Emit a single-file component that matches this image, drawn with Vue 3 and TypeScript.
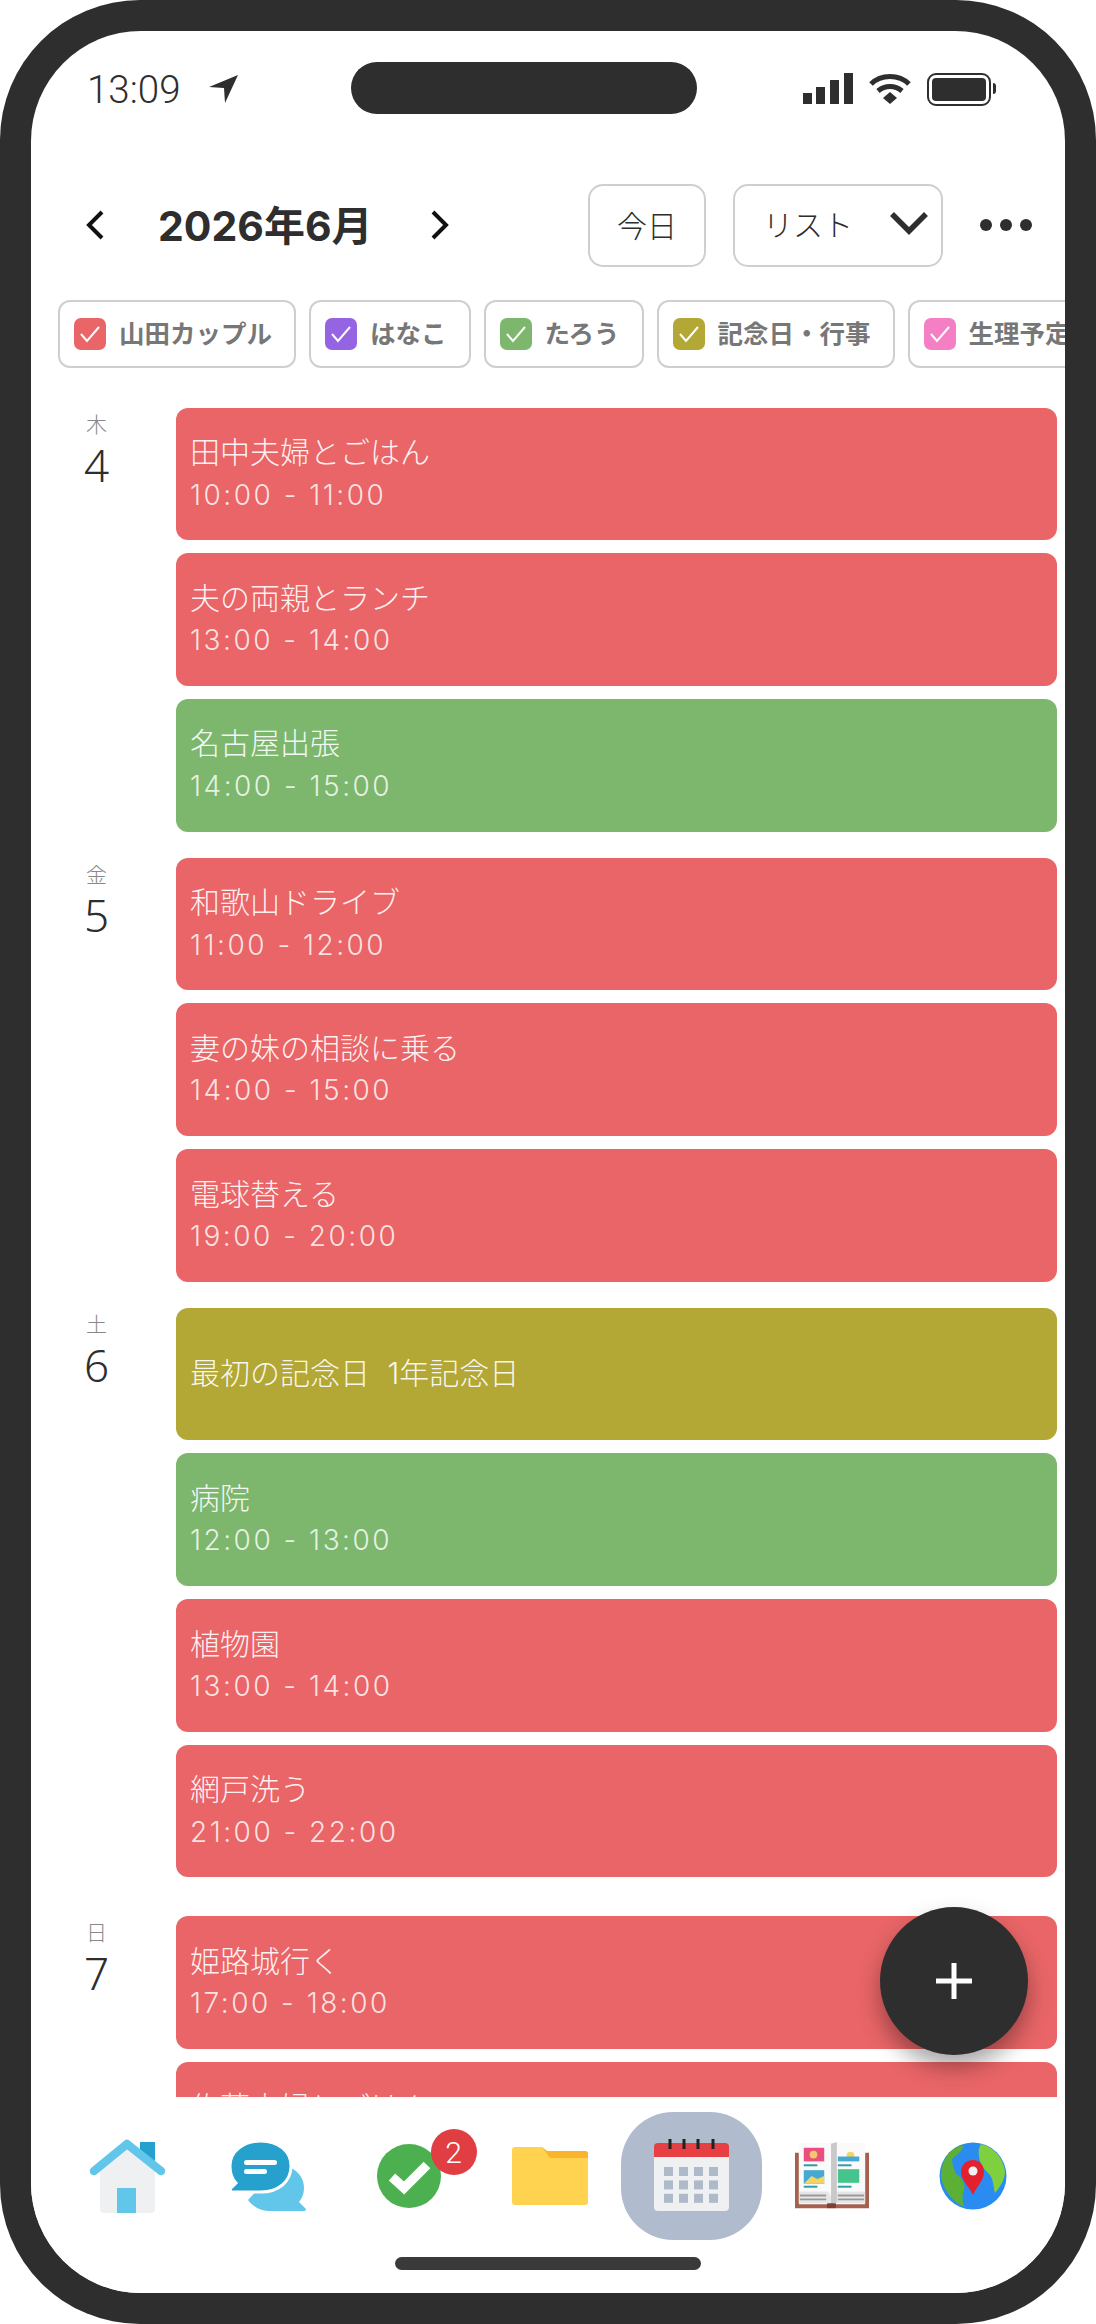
<script setup lang="ts">
interface Item {
  title: string;
  time?: string;
  color: string;
}
interface Day {
  week: string;
  date: number;
  items: Item[];
}

const RED = "#e96567";
const GREEN = "#7db76d";
const OLIVE = "#b3a735";

const chips = [
  { label: "山田カップル", color: RED },
  { label: "はなこ", color: "#9464e3" },
  { label: "たろう", color: GREEN },
  { label: "記念日・行事", color: OLIVE },
  { label: "生理予定日", color: "#f57fc5" },
];

const days: Day[] = [
  {
    week: "木",
    date: 4,
    items: [
      { title: "田中夫婦とごはん", time: "10:00 - 11:00", color: RED },
      { title: "夫の両親とランチ", time: "13:00 - 14:00", color: RED },
      { title: "名古屋出張", time: "14:00 - 15:00", color: GREEN },
    ],
  },
  {
    week: "金",
    date: 5,
    items: [
      { title: "和歌山ドライブ", time: "11:00 - 12:00", color: RED },
      { title: "妻の妹の相談に乗る", time: "14:00 - 15:00", color: RED },
      { title: "電球替える", time: "19:00 - 20:00", color: RED },
    ],
  },
  {
    week: "土",
    date: 6,
    items: [
      { title: "最初の記念日 1年記念日", color: OLIVE },
      { title: "病院", time: "12:00 - 13:00", color: GREEN },
      { title: "植物園", time: "13:00 - 14:00", color: RED },
      { title: "網戸洗う", time: "21:00 - 22:00", color: RED },
    ],
  },
  {
    week: "日",
    date: 7,
    items: [
      { title: "姫路城行く", time: "17:00 - 18:00", color: RED },
      { title: "佐藤夫婦とごはん", time: "19:00 - 20:00", color: RED },
    ],
  },
];

const calendarCells = [0, 1, 2].flatMap((r) => [0, 1, 2, 3].map((c) => ({ x: 10 + c * 15, y: 28 + r * 13.4 })));
</script>

<template>
  <div class="phone">
    <div class="screen">
      <div class="notch"></div>

      <div class="status">
        <div class="status-left">
          <span class="clock">13:09</span>
          <svg width="30" height="30" viewBox="0 0 30 30"><path d="M0 13 29 1 16 29 15 14Z" fill="#2e2e2e" /></svg>
        </div>
        <div class="status-right">
          <svg width="50" height="32" viewBox="0 0 50 32" fill="#2e2e2e">
            <rect x="0" y="20" width="9" height="11" />
            <rect x="13" y="14" width="9" height="17" />
            <rect x="27" y="7" width="9" height="24" />
            <rect x="41" y="0" width="9" height="31" />
          </svg>
          <svg width="44" height="32" viewBox="0 0 44 32" fill="none" stroke="#2e2e2e" stroke-width="5">
            <path d="M3 11C13 1 31 1 41 11" />
            <path d="M10 18C17 12 27 12 34 18" />
            <path d="M15 25 22 19 29 25 22 31Z" fill="#2e2e2e" stroke="none" />
          </svg>
          <div class="battery"><div class="battery-fill"></div></div>
        </div>
      </div>

      <header class="toolbar">
        <svg class="chevron" width="22" height="32" viewBox="0 0 22 32" fill="none" stroke="#111" stroke-width="4">
          <path d="M18 3 5 16 18 29" />
        </svg>
        <h1 class="month">2026年6月</h1>
        <svg class="chevron" width="22" height="32" viewBox="0 0 22 32" fill="none" stroke="#111" stroke-width="4">
          <path d="M4 3 17 16 4 29" />
        </svg>
        <button class="btn today">今日</button>
        <button class="btn view">
          <span>リスト</span>
          <svg width="40" height="26" viewBox="0 0 40 26" fill="none" stroke="#2e2e2e" stroke-width="5.5">
            <path d="M3 4 20 21 37 4" />
          </svg>
        </button>
        <div class="more"><i></i><i></i><i></i></div>
      </header>

      <div class="chips">
        <div v-for="chip in chips" :key="chip.label" class="chip">
          <span class="check" :style="{ background: chip.color }">
            <svg width="22" height="20" viewBox="0 0 22 20" fill="none" stroke="#fff" stroke-width="2">
              <path d="M2 10 8 17 20 3" />
            </svg>
          </span>
          <span class="chip-label">{{ chip.label }}</span>
        </div>
      </div>

      <main class="list">
        <section v-for="day in days" :key="day.date" class="day">
          <div class="day-label">
            <span class="week">{{ day.week }}</span>
            <span class="date">{{ day.date }}</span>
          </div>
          <div class="cards">
            <div v-for="item in day.items" :key="item.title" class="card" :style="{ background: item.color }">
              <div class="title">{{ item.title }}</div>
              <div v-if="item.time" class="time">{{ item.time }}</div>
            </div>
          </div>
        </section>
      </main>

      <button class="fab">
        <svg width="40" height="40" viewBox="0 0 40 40" fill="none" stroke="#fff" stroke-width="5">
          <path d="M20 2V38M2 20H38" />
        </svg>
      </button>

      <nav class="nav">
        <div class="nav-item">
          <svg width="78" height="78" viewBox="0 0 78 78">
            <rect x="52" y="5" width="15" height="24" fill="#26a1cd" />
            <path d="M12 34 39 10 67 34V72a4 4 0 0 1-4 4H16a4 4 0 0 1-4-4Z" fill="#eef0f1" />
            <rect x="29" y="51" width="19" height="25" fill="#62c6ea" />
            <path d="M6 34 39 7 73 34" fill="none" stroke="#62c6ea" stroke-width="8.5" stroke-linejoin="round" stroke-linecap="round" />
          </svg>
        </div>
        <div class="nav-item">
          <svg width="80" height="76" viewBox="0 0 80 76">
            <path d="M56 27C70 31 76 40 76 50 76 56 74 60 71 64L78 71 77 73H42C33 73 25 69 20 62L40 40Z" fill="#62c6ea" />
            <path d="M33 3C50 3 63 13 63 28 63 44 50 54 33 54H3L2 51 8 45C4 41 2 35 2 28 2 13 16 3 33 3Z" fill="#26a1cd" stroke="#fff" stroke-width="3" />
            <rect x="16" y="22" width="33" height="5" rx="2.5" fill="#fff" />
            <rect x="16" y="31" width="23" height="5" rx="2.5" fill="#fff" />
          </svg>
        </div>
        <div class="nav-item todo">
          <svg width="64" height="64" viewBox="0 0 64 64">
            <circle cx="32" cy="32" r="32" fill="#4caf50" />
            <path d="M15 33 27 44 50 21" fill="none" stroke="#fff" stroke-width="9.5" />
          </svg>
          <span class="badge">2</span>
        </div>
        <div class="nav-item">
          <svg width="76" height="58" viewBox="0 0 76 58">
            <path d="M3 0H30L35 4H73a3 3 0 0 1 3 3V55a3 3 0 0 1-3 3H3a3 3 0 0 1-3-3V3a3 3 0 0 1 3-3Z" fill="#ffd24f" />
            <path d="M30 0 35 4H73a3 3 0 0 1 3 3V11H38Z" fill="#f9b42b" />
          </svg>
        </div>
        <div class="nav-item active">
          <svg width="75" height="74" viewBox="0 0 75 74">
            <path d="M0 18H75V68a4 4 0 0 1-4 4H4a4 4 0 0 1-4-4Z" fill="#eef0f2" />
            <path d="M4 4H71a4 4 0 0 1 4 4V18H0V8a4 4 0 0 1 4-4Z" fill="#e63f44" />
            <path d="M16 0V10M30 0V10M44 0V10M59 0V10" stroke="#222" stroke-width="3" />
            <rect v-for="cell in calendarCells" :key="`${cell.x}-${cell.y}`" :x="cell.x" :y="cell.y" width="9" height="9" fill="#aeb9c9" />
          </svg>
        </div>
        <div class="nav-item">
          <svg width="74" height="70" viewBox="0 0 76 70">
            <path d="M0 11H4V63H72V11H76V68H0Z" fill="#a5604f" />
            <path d="M4 1H38V64H4Z" fill="#fafafa" />
            <path d="M38 1H72V64H38Z" fill="#fafafa" />
            <circle cx="57" cy="14" r="4" fill="#f4d35e" />
            <rect x="9" y="6" width="21" height="14" fill="#ea4f80" />
            <circle cx="19" cy="13" r="4" fill="#f4c86a" />
            <rect x="9" y="23" width="14" height="2" fill="#2a9ca8" />
            <rect x="9" y="29" width="21" height="14" fill="#45a9d4" />
            <path d="M9 43 17 35 23 38 30 35V43Z" fill="#f4d35e" />
            <rect x="9" y="45" width="14" height="2" fill="#2a9ca8" />
            <rect x="44" y="15" width="22" height="5" fill="#45a9d4" />
            <rect x="44" y="23" width="14" height="2" fill="#2a9ca8" />
            <rect x="44" y="28" width="22" height="14" fill="#45c48d" />
            <rect x="44" y="45" width="14" height="2" fill="#2a9ca8" />
            <path d="M4 51H34L38 58 42 51H72V63H4Z" fill="#e6e6e6" />
            <path d="M5 55H32M44 55H71M5 59H32M44 59H71" stroke="#999" stroke-width="2" />
            <path d="M37 2 43 0V62L37 64Z" fill="#c9c9c9" />
            <rect x="33" y="63" width="9" height="5" fill="#7d3f35" />
          </svg>
        </div>
        <div class="nav-item">
          <svg width="70" height="70" viewBox="0 0 70 70">
            <circle cx="35" cy="35" r="33.5" fill="#2a8cf0" />
            <path d="M12 11C18 6 22 4 25 5 25 10 18 14 14 18 14 23 16 28 18 33 24 37 28 43 26 49 24 54 24 58 26 66 15 61 6 50 3 36 3 26 6 17 12 11Z" fill="#5bb035" />
            <path d="M43 3C56 6 65 17 67 30 67 38 63 45 57 52 55 46 56 40 52 34 46 28 42 24 41 15 40 10 41 6 43 3Z" fill="#7ed03f" />
            <path d="M35 19C28 19 23 24 23 31 23 39 31 45 35 54 39 45 46 39 46 31 46 24 42 19 35 19Z" fill="#e5202e" />
            <circle cx="35" cy="30" r="4.5" fill="#f1f1f1" />
          </svg>
        </div>
      </nav>

      <div class="home-bar"><span></span></div>
    </div>
  </div>
</template>

<style scoped>
.phone {
  width: 1096px;
  height: 2324px;
  box-sizing: border-box;
  padding: 31px;
  border-radius: 140px;
  background: #2e2e2e;
  font-family: "Noto Sans CJK JP", "Noto Sans", sans-serif;
}

.screen {
  position: relative;
  display: flex;
  flex-direction: column;
  height: 100%;
  overflow: hidden;
  border-radius: 110px;
  background: #fff;
}

.notch {
  position: absolute;
  top: 31px;
  left: 320px;
  width: 346px;
  height: 52px;
  border-radius: 26px;
  background: #2e2e2e;
}

.status {
  display: flex;
  justify-content: space-between;
  align-items: center;
  height: 58px;
  padding: 29px 74px 0 56px;
  flex: none;
}

.status-left {
  display: flex;
  align-items: center;
  gap: 28px;
}

.clock {
  font-family: Roboto, sans-serif;
  font-size: 38.5px;
  font-weight: 300;
  color: #2e2e2e;
}

.status-right {
  display: flex;
  align-items: center;
  gap: 15px;
}

.battery {
  position: relative;
  box-sizing: border-box;
  width: 64px;
  height: 33px;
  padding: 3px;
  border: 2.5px solid #2e2e2e;
  border-radius: 9px;
}

.battery::after {
  content: "";
  position: absolute;
  top: 8px;
  right: -7px;
  width: 3px;
  height: 11px;
  border-radius: 0 3px 3px 0;
  background: #2e2e2e;
}

.battery-fill {
  height: 100%;
  border-radius: 4px;
  background: #2e2e2e;
}

.toolbar {
  display: flex;
  align-items: center;
  height: 83px;
  margin-top: 65.5px;
  padding: 0 33px 0 53px;
  flex: none;
}

.chevron {
  flex: none;
}

.month {
  margin: 0 56px 4px 52px;
  font-family: Inter, "Noto Sans CJK JP", sans-serif;
  font-size: 41px;
  font-weight: 700;
  color: #2e2e2e;
  white-space: nowrap;
}

.btn {
  display: flex;
  align-items: center;
  box-sizing: border-box;
  height: 83px;
  padding-bottom: 4px;
  border: 2.5px solid #cfcfcf;
  border-radius: 15px;
  background: #fff;
  font-family: inherit;
  font-size: 30px;
  font-weight: 300;
  color: #2e2e2e;
  flex: none;
}

.today {
  justify-content: center;
  width: 118px;
  margin-left: auto;
}

.view {
  justify-content: space-between;
  width: 210px;
  margin-left: 27px;
  padding: 0 12px 4px 28px;
}

.more {
  display: flex;
  gap: 8px;
  margin-left: 37px;
}

.more i {
  width: 12px;
  height: 12px;
  border-radius: 50%;
  background: #2e2e2e;
}

.chips {
  display: flex;
  gap: 13px;
  height: 68px;
  margin-top: 33px;
  padding-left: 27px;
  overflow: hidden;
  flex: none;
}

.chip {
  display: flex;
  align-items: center;
  gap: 13px;
  box-sizing: border-box;
  height: 68px;
  padding: 0 22px 0 14px;
  border: 2.5px solid #cfcfcf;
  border-radius: 12px;
  font-size: 25.5px;
  font-weight: 700;
  color: #777;
  white-space: nowrap;
  flex: none;
}

.chip-label {
  padding-bottom: 4px;
}

.check {
  display: flex;
  align-items: center;
  justify-content: center;
  width: 32px;
  height: 32px;
  border-radius: 7px;
}

.list {
  flex: 1;
  min-height: 0;
  margin-top: 40px;
  overflow: hidden;
}

.day {
  display: flex;
  margin-bottom: 26px;
}

.day:nth-child(3) {
  margin-bottom: 39px;
}

.day-label {
  display: flex;
  flex-direction: column;
  align-items: center;
  width: 130px;
  padding: 3px 0 0 1px;
  box-sizing: border-box;
  flex: none;
}

.week {
  font-size: 21px;
  font-weight: 300;
  line-height: 24px;
  color: #888;
}

.date {
  margin-top: 5px;
  font-family: "Noto Sans", sans-serif;
  font-size: 44px;
  font-weight: 300;
  line-height: 50px;
  color: #2e2e2e;
}

.cards {
  display: flex;
  flex: 1;
  flex-direction: column;
  gap: 13px;
  margin: 0 8px 0 15px;
}

.card {
  display: flex;
  flex-direction: column;
  justify-content: center;
  box-sizing: border-box;
  height: 132.7px;
  padding: 0 14px;
  border-radius: 12px;
  color: rgba(255, 255, 255, 0.92);
  font-family: Inter, "Noto Sans CJK JP", sans-serif;
  font-weight: 300;
}

.title {
  font-size: 30px;
  line-height: 41px;
  word-spacing: 9px;
}

.time {
  margin-top: 1.5px;
  font-size: 28px;
  line-height: 41px;
  letter-spacing: 2.5px;
  opacity: 0.9;
}

.fab {
  position: absolute;
  top: 1876px;
  left: 849px;
  display: flex;
  align-items: center;
  justify-content: center;
  width: 148px;
  height: 148px;
  border: none;
  border-radius: 50%;
  background: #2e2e2e;
  box-shadow: 0 12px 22px rgba(0, 0, 0, 0.35);
}

.nav {
  position: relative;
  display: flex;
  align-items: center;
  height: 160px;
  padding: 0 0 2px 25.5px;
  box-sizing: border-box;
  background: #fff;
  flex: none;
}

.nav-item {
  position: relative;
  display: flex;
  align-items: center;
  justify-content: center;
  width: 141px;
  height: 128px;
  flex: none;
}

.nav-item.active {
  border-radius: 52px;
  background: #b0bccd;
}

.badge {
  position: absolute;
  top: 17px;
  right: 3px;
  display: flex;
  align-items: center;
  justify-content: center;
  width: 46px;
  height: 46px;
  border-radius: 50%;
  background: #e03e42;
  font-family: Roboto, sans-serif;
  font-size: 30px;
  font-weight: 300;
  color: #fff;
}

.home-bar {
  display: flex;
  justify-content: center;
  height: 36px;
  background: #fff;
  flex: none;
}

.home-bar span {
  width: 306px;
  height: 13px;
  border-radius: 7px;
  background: #3a3a3a;
}
</style>

<style>
body {
  background: #fff;
}
</style>
